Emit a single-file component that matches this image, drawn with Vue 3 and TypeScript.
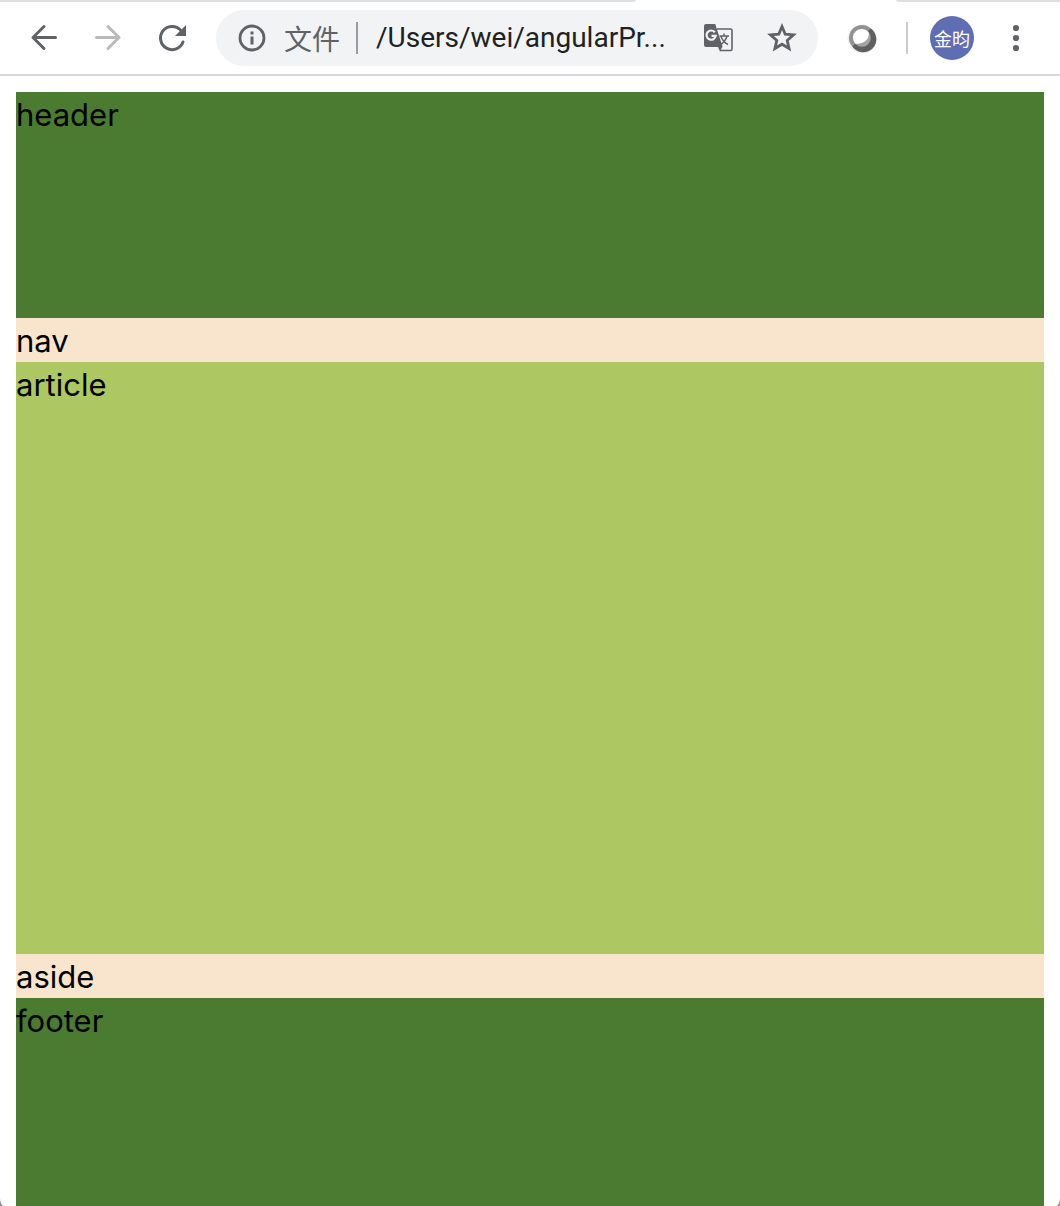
<script setup lang="ts">
import { ref } from 'vue'

interface Section {
  tag: 'header' | 'nav' | 'article' | 'aside' | 'footer'
}

const url = ref('/Users/wei/angularPr...')
const sections: Section[] = [
  { tag: 'header' },
  { tag: 'nav' },
  { tag: 'article' },
  { tag: 'aside' },
  { tag: 'footer' },
]
</script>

<template>
  <div class="window">
    <div class="tabs">
      <span class="tab-left"></span>
      <span class="tab-right"></span>
    </div>
    <div class="toolbar">
      <button class="tool" type="button" aria-label="Back">
        <svg width="32" height="32" viewBox="0 0 32 32" fill="none" stroke="#5f6368" stroke-width="3" stroke-linecap="round" stroke-linejoin="round">
          <path d="M27.500 15.500H5M16 4.500 5 15.500 16 26.500" />
        </svg>
      </button>
      <button class="tool" type="button" aria-label="Forward" disabled>
        <svg width="32" height="32" viewBox="0 0 32 32" fill="none" stroke="#bababa" stroke-width="3" stroke-linecap="round" stroke-linejoin="round">
          <path d="M4.500 15.500H27M16 4.500 27 15.500 16 26.500" />
        </svg>
      </button>
      <button class="tool" type="button" aria-label="Reload">
        <svg width="32" height="32" viewBox="0 0 32 32" fill="none">
          <path d="M24.500 8A11.600 11.600 0 1 0 27 20" stroke="#5f6368" stroke-width="3" stroke-linecap="round" />
          <path d="M30 3V14H19Z" fill="#5f6368" />
        </svg>
      </button>

      <div class="omnibox">
        <button class="info" type="button" aria-label="Site information">
          <svg width="28" height="28" viewBox="0 0 28 28" fill="none">
            <circle cx="14" cy="14" r="12" stroke="#5f6368" stroke-width="2.800" />
            <path d="M14 7.500V10.500M14 12.500V20.500" stroke="#5f6368" stroke-width="3" />
          </svg>
          <span>文件</span>
        </button>
        <span class="rule dark"></span>
        <input v-model="url" class="url" type="text" aria-label="Address" spellcheck="false" />
        <button class="translate" type="button" aria-label="Translate">
          <svg width="30" height="30" viewBox="0 0 30 30" fill="none">
            <path d="M13 6H26.500Q28 6 28 7.500V26Q28 27.500 26.500 27.500H16" stroke="#5f6368" stroke-width="1.600" />
            <path d="M2 1H11.200L18.500 23.500L16 28.500L14 24H2Q0 24 0 22V3Q0 1 2 1Z" fill="#5f6368" />
            <path d="M10.800 9.300A4.600 4.600 0 1 0 11.700 12.900H7.500" stroke="#f1f3f4" stroke-width="2.200" />
            <path d="M15.500 13H25M20 10.500V13M17 13.500Q19 19 24 21.500M23 13Q21.500 18.500 16 22" stroke="#5f6368" stroke-width="1.500" />
          </svg>
        </button>
        <button class="star" type="button" aria-label="Bookmark this page">
          <svg width="32" height="32" viewBox="0 0 32 32" fill="none">
            <path d="M16 4.500 19.200 12.100 27.500 12.900 21.200 18.400 23.100 26.500 16 22.200 8.900 26.500 10.800 18.400 4.500 12.900 12.800 12.100Z" stroke="#5f6368" stroke-width="2.800" />
          </svg>
        </button>
      </div>

      <button class="extension" type="button" aria-label="Extension">
        <svg width="32" height="32" viewBox="0 0 32 32" fill="none">
          <circle cx="16" cy="17" r="14.500" fill="#f0f0f0" />
          <circle cx="16" cy="16" r="13" fill="#929292" />
          <path d="M24.500 6.500A13 13 0 1 1 6.500 24.500L10 21 21 10Z" fill="#5f5f5f" />
          <circle cx="16" cy="16" r="8.800" fill="#a3a3a3" />
          <path d="M22.500 10A8.800 8.800 0 1 0 9 21.500C17 23 24.500 17 22.500 10Z" fill="#fff" />
        </svg>
      </button>
      <span class="rule"></span>
      <button class="avatar" type="button">金昀</button>
      <button class="menu" type="button" aria-label="Menu">
        <svg width="8" height="28" viewBox="0 0 8 28" fill="#5f6368">
          <circle cx="4" cy="4" r="3.100" />
          <circle cx="4" cy="14" r="3.100" />
          <circle cx="4" cy="24" r="3.100" />
        </svg>
      </button>
    </div>

    <main class="page">
      <component :is="s.tag" v-for="s in sections" :key="s.tag" class="block" :class="s.tag">{{ s.tag }}</component>
    </main>
  </div>
</template>

<style>
body {
  background: #8c8c8c;
}
</style>

<style scoped>
.window {
  display: flex;
  flex-direction: column;
  min-height: 100vh;
  background: #fff;
  border-radius: 0 0 4px 4px / 0 0 8px 8px;
  overflow: hidden;
  font-family: Inter, "Noto Sans CJK SC", sans-serif;
}

.tabs {
  display: flex;
  justify-content: space-between;
  height: 2px;
}

.tab-left {
  width: 60%;
  background: #dedee3;
  border-bottom-right-radius: 4px 2px;
}

.tab-right {
  flex: 0 0 164px;
  background: #dedee3;
  border-bottom-left-radius: 4px 2px;
}

.toolbar {
  display: flex;
  align-items: center;
  height: 72px;
  padding: 0 2px 0 12px;
  border-bottom: 2px solid #dadade;
}

button {
  display: flex;
  flex: none;
  align-items: center;
  justify-content: center;
  padding: 0;
  border: 0;
  background: none;
  font-family: inherit;
}

.tool {
  width: 64px;
  height: 64px;
}

.omnibox {
  display: flex;
  flex: 1;
  align-items: center;
  min-width: 0;
  height: 56px;
  margin-left: 12px;
  padding: 0 20px 0 22px;
  border-radius: 28px;
  background: #f1f3f4;
}

.info {
  gap: 18px;
  color: #5f6368;
  font-family: "Noto Sans CJK SC", sans-serif;
  font-size: 28px;
  line-height: 40px;
}

.rule {
  flex: none;
  width: 2px;
  height: 32px;
  background: #ccc;
}

.dark {
  margin: 0 18px 0 16px;
  background: #9a9c9f;
}

.url {
  flex: 1;
  min-width: 0;
  padding: 0;
  border: 0;
  outline: 0;
  background: none;
  color: #202124;
  font-family: Roboto, sans-serif;
  font-size: 28px;
  line-height: 40px;
}

.translate {
  margin-right: 32px;
}

.extension {
  margin: 0 28px;
}

.avatar {
  width: 44px;
  height: 44px;
  margin-left: 22px;
  border-radius: 50%;
  background: #5f6db3;
  color: #fff;
  font-family: "Noto Sans CJK SC", sans-serif;
  font-size: 18px;
}

.menu {
  width: 84px;
  height: 56px;
}

.page {
  display: flex;
  flex: 1;
  flex-direction: column;
  padding: 16px 16px 0;
  color: #000;
  font-size: 31px;
  line-height: 42px;
}

.block {
  box-sizing: border-box;
  padding-top: 2px;
}

.header {
  height: 226px;
  background: #4a7b30;
}

.nav,
.aside {
  background: #f9e5cd;
}

.article {
  flex: 1;
  background: #adc762;
}

.footer {
  height: 208px;
  background: #4a7b30;
}
</style>
